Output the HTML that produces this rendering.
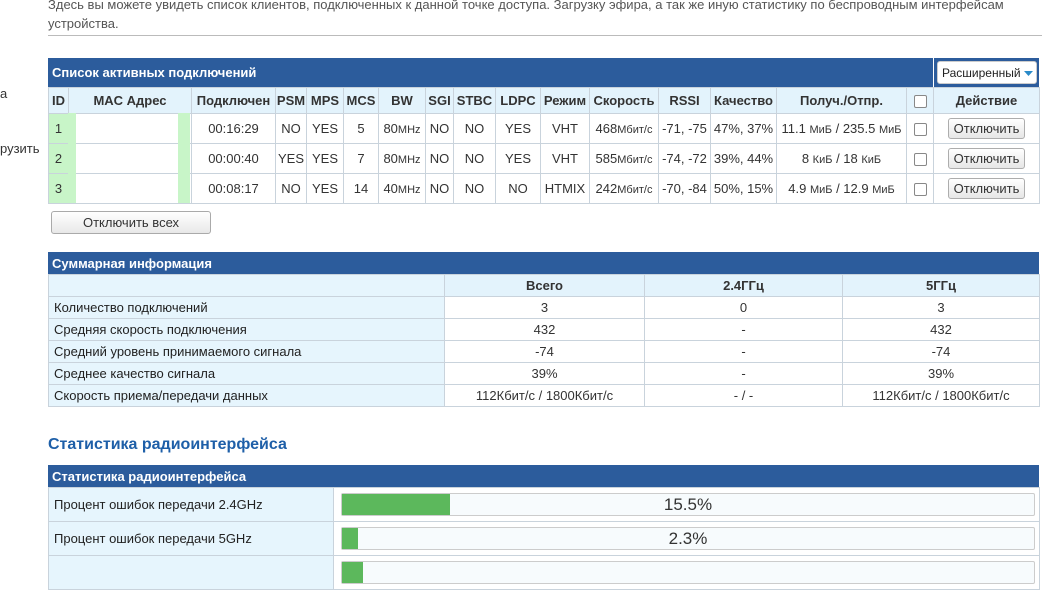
<!DOCTYPE html>
<html><head><meta charset="utf-8"><style>
*{box-sizing:border-box;margin:0;padding:0}
body{width:1050px;height:564px;overflow:hidden;background:#fff;font-family:"Liberation Sans","Noto Sans CJK SC",sans-serif;font-size:13px;color:#333;position:relative}
.abs{position:absolute}
table{border-collapse:collapse;position:absolute;table-layout:fixed}
td,th{border:1px solid #c9d3dc;text-align:center;white-space:nowrap;overflow:hidden;padding:0}
.bar{background:#2c5c9c;color:#fff;font-weight:bold;font-size:13px}
th{background:#e3f3fc;font-weight:bold;color:#333}
.g{background:#c8f5c8}
.sm{font-size:11px}
.btn{display:inline-block;border:1px solid #adadad;border-radius:3px;background:linear-gradient(#fff,#e6e6e6);font-size:13px;padding:2px 5px;line-height:15px}
.cb{display:inline-block;width:13px;height:13px;border:1px solid #888;border-radius:2px;background:#fff;vertical-align:middle}
.lab{background:#e6f5fd;text-align:left;padding-left:5px;color:#222}
</style></head><body>
<div class="abs" style="left:48px;top:-5px;font-size:13px;color:#555;line-height:19px">Здесь вы можете увидеть список клиентов, подключенных к данной точке доступа. Загрузку эфира, а так же иную статистику по беспроводным интерфейсам<br>устройства.</div>
<div class="abs" style="left:48px;top:35px;width:994px;height:1px;background:#bbb"></div>
<div class="abs" style="left:0;top:86px;color:#333">а</div>
<div class="abs" style="left:0;top:141px;color:#333">рузить</div>

<div class="abs bar" style="left:48px;top:58px;width:991px;height:29px;padding:7px 4px">Список активных подключений</div>
<div class="abs" style="left:933px;top:58px;width:1px;height:29px;background:#fff"></div>
<div class="abs" style="left:937px;top:61px;width:100px;height:23px;background:#fff;border:1px solid #ccc;border-radius:3px;font-size:12px;padding:4px 4px;color:#222;white-space:nowrap;overflow:hidden">Расширенный<svg width="9" height="6" style="margin-left:3px;vertical-align:middle"><path d="M0 0H9L4.5 5Z" fill="#2a8ac8"/></svg></div>

<table style="left:48px;top:87px;width:991px">
<colgroup><col style="width:20px"><col style="width:123px"><col style="width:84px"><col style="width:31px"><col style="width:37px"><col style="width:35px"><col style="width:47px"><col style="width:28px"><col style="width:42px"><col style="width:45px"><col style="width:49px"><col style="width:69px"><col style="width:52px"><col style="width:66px"><col style="width:130px"><col style="width:27px"><col style="width:106px"></colgroup>
<tr style="height:26px"><th>ID</th><th>MAC Адрес</th><th>Подключен</th><th>PSM</th><th>MPS</th><th>MCS</th><th>BW</th><th>SGI</th><th>STBC</th><th>LDPC</th><th>Режим</th><th>Скорость</th><th>RSSI</th><th>Качество</th><th>Получ./Отпр.</th><th><span class="cb"></span></th><th>Действие</th></tr>
<tr style="height:30px"><td class="g">1</td><td class="g" style="background:#fff"></td><td>00:16:29</td><td>NO</td><td>YES</td><td>5</td><td>80<span class="sm">MHz</span></td><td>NO</td><td>NO</td><td>YES</td><td>VHT</td><td>468<span class="sm">Мбит/с</span></td><td>-71, -75</td><td>47%, 37%</td><td>11.1 <span class="sm">МиБ</span> / 235.5 <span class="sm">МиБ</span></td><td><span class="cb"></span></td><td><span class="btn">Отключить</span></td></tr>
<tr style="height:30px"><td class="g">2</td><td class="g" style="background:#fff"></td><td>00:00:40</td><td>YES</td><td>YES</td><td>7</td><td>80<span class="sm">MHz</span></td><td>NO</td><td>NO</td><td>YES</td><td>VHT</td><td>585<span class="sm">Мбит/с</span></td><td>-74, -72</td><td>39%, 44%</td><td>8 <span class="sm">КиБ</span> / 18 <span class="sm">КиБ</span></td><td><span class="cb"></span></td><td><span class="btn">Отключить</span></td></tr>
<tr style="height:30px"><td class="g">3</td><td class="g" style="background:#fff"></td><td>00:08:17</td><td>NO</td><td>YES</td><td>14</td><td>40<span class="sm">MHz</span></td><td>NO</td><td>NO</td><td>NO</td><td>HTMIX</td><td>242<span class="sm">Мбит/с</span></td><td>-70, -84</td><td>50%, 15%</td><td>4.9 <span class="sm">МиБ</span> / 12.9 <span class="sm">МиБ</span></td><td><span class="cb"></span></td><td><span class="btn">Отключить</span></td></tr>
</table>
<div class="abs g" style="left:68px;top:113px;width:8px;height:90px"></div>
<div class="abs g" style="left:178px;top:113px;width:12px;height:90px"></div>
<div class="abs" style="left:51px;top:211px;width:160px;height:23px;border:1px solid #aaa;border-radius:3px;background:linear-gradient(#fff,#e8e8e8);text-align:center;line-height:21px">Отключить всех</div>

<div class="abs bar" style="left:48px;top:252px;width:991px;height:22px;padding:4px 4px">Суммарная информация</div>
<table style="left:48px;top:274px;width:991px">
<colgroup><col style="width:396px"><col style="width:200px"><col style="width:198px"><col style="width:197px"></colgroup>
<tr style="height:22px"><th style="background:#e6f5fd"></th><th>Всего</th><th>2.4ГГц</th><th>5ГГц</th></tr>
<tr style="height:22px"><td class="lab">Количество подключений</td><td>3</td><td>0</td><td>3</td></tr>
<tr style="height:22px"><td class="lab">Средняя скорость подключения</td><td>432</td><td>-</td><td>432</td></tr>
<tr style="height:22px"><td class="lab">Средний уровень принимаемого сигнала</td><td>-74</td><td>-</td><td>-74</td></tr>
<tr style="height:22px"><td class="lab">Среднее качество сигнала</td><td>39%</td><td>-</td><td>39%</td></tr>
<tr style="height:22px"><td class="lab">Скорость приема/передачи данных</td><td>112Кбит/с / 1800Кбит/с</td><td>- / -</td><td>112Кбит/с / 1800Кбит/с</td></tr>
</table>

<div class="abs" style="left:48px;top:436px;font-size:16px;font-weight:bold;color:#1e5fa8">Статистика радиоинтерфейса</div>
<div class="abs bar" style="left:48px;top:465px;width:991px;height:22px;padding:4px 4px">Статистика радиоинтерфейса</div>
<table style="left:48px;top:487px;width:991px">
<colgroup><col style="width:285px"><col style="width:706px"></colgroup>
<tr style="height:34px"><td class="lab">Процент ошибок передачи 2.4GHz</td><td></td></tr>
<tr style="height:34px"><td class="lab">Процент ошибок передачи 5GHz</td><td></td></tr>
<tr style="height:34px"><td class="lab"></td><td></td></tr>
</table>
<div class="abs" style="left:341px;top:493px;width:694px;height:23px;border:1px solid #ccc;border-radius:2px;background:#f7fbfd;text-align:center;font-size:17px;line-height:21px;color:#333"><div class="abs" style="left:0;top:0;width:108px;height:21px;background:#5cb85c"></div><span style="position:relative">15.5%</span></div>
<div class="abs" style="left:341px;top:527px;width:694px;height:23px;border:1px solid #ccc;border-radius:2px;background:#f7fbfd;text-align:center;font-size:17px;line-height:21px;color:#333"><div class="abs" style="left:0;top:0;width:16px;height:21px;background:#5cb85c"></div><span style="position:relative">2.3%</span></div>
<div class="abs" style="left:341px;top:561px;width:694px;height:23px;border:1px solid #ccc;border-radius:2px;background:#f7fbfd"><div class="abs" style="left:0;top:0;width:21px;height:21px;background:#5cb85c"></div></div>
</body></html>
